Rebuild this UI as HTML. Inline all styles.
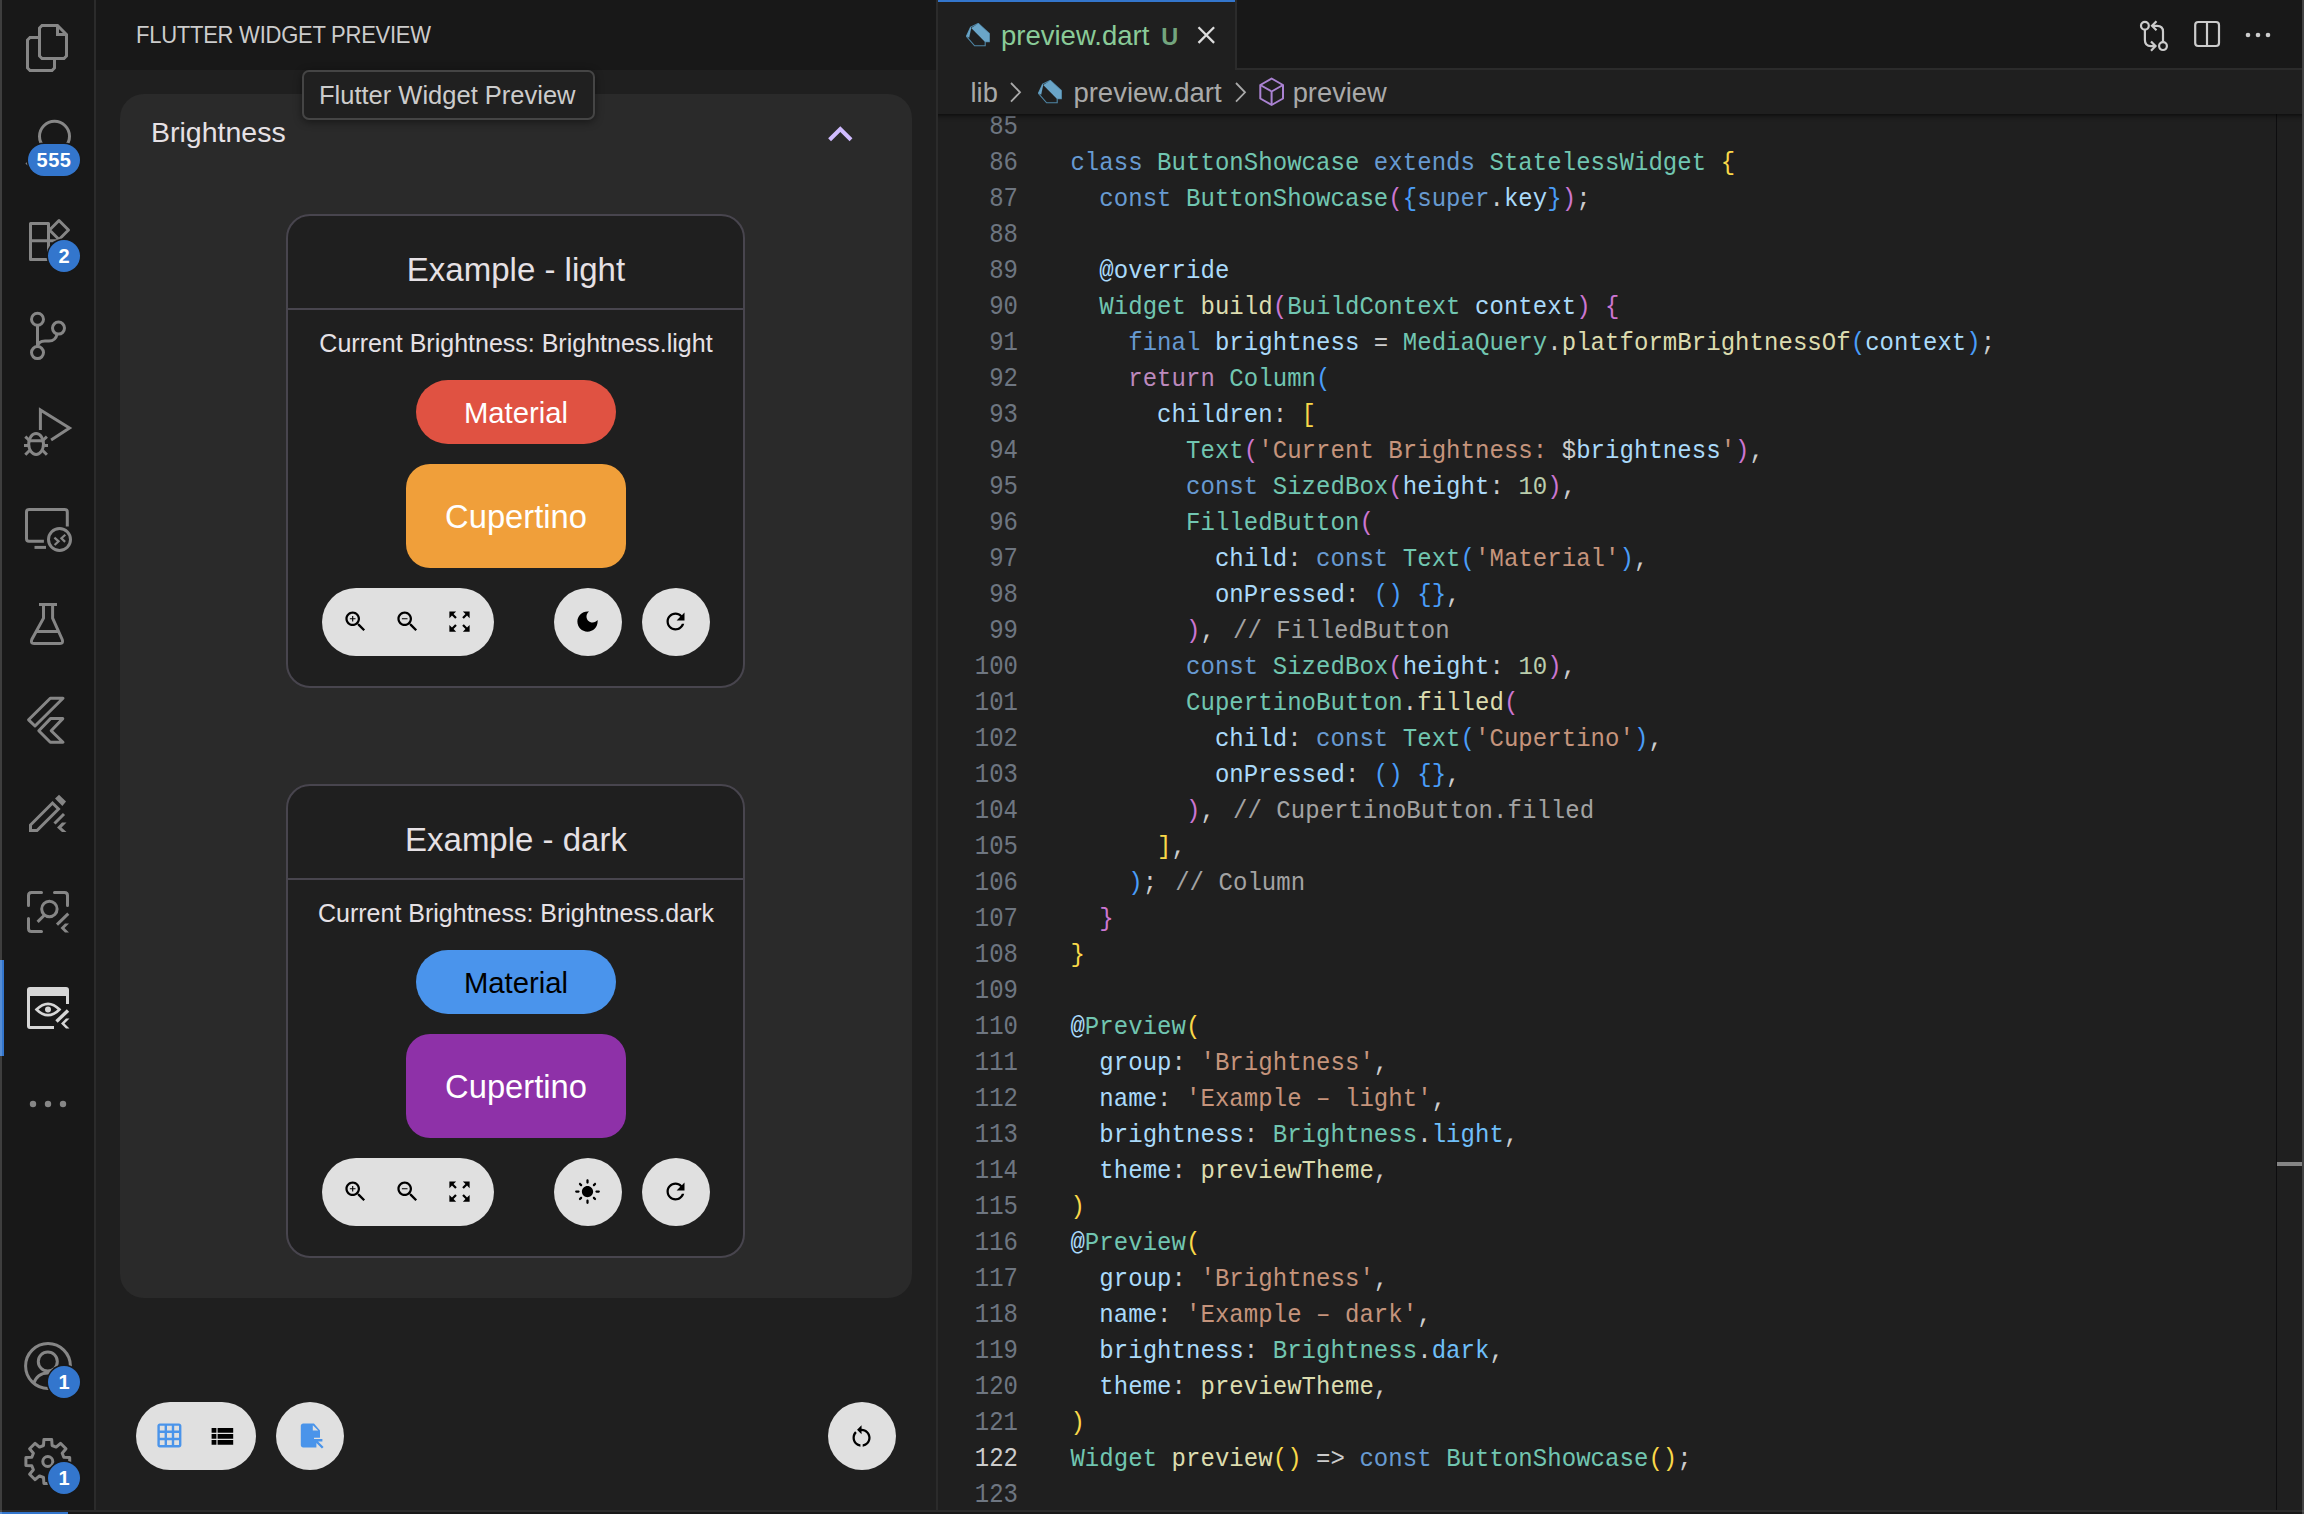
<!DOCTYPE html>
<html><head><meta charset="utf-8"><title>Flutter Widget Preview</title>
<style>
html,body{margin:0;padding:0;}
body{width:2304px;height:1514px;overflow:hidden;position:relative;background:#181818;font-family:"Liberation Sans",sans-serif;}
div,span,svg{box-sizing:border-box;}
.abs{position:absolute;}
.t1{position:absolute;line-height:1;white-space:pre;}
/* activity bar */
#act{position:absolute;left:0;top:0;width:96px;height:1510px;background:#181818;border-right:2px solid #2b2b2b;}
#act svg{position:absolute;left:0;top:0;}
.badge{position:absolute;height:32px;border-radius:16px;background:#3376cd;color:#fff;font:bold 20px/32px "Liberation Sans",sans-serif;text-align:center;}
#actind{position:absolute;left:0;top:960px;width:4px;height:96px;background:#3376cd;z-index:4;}
/* sidebar */
#side{position:absolute;left:96px;top:0;width:842px;height:1510px;background:#1f1f1f;border-right:2px solid #2b2b2b;}
#sidehead{position:absolute;left:0;top:0;width:840px;height:70px;background:#181818;}
#panel{position:absolute;left:24px;top:94px;width:792px;height:1204px;background:#2a2a2a;border-radius:24px;}
.card{position:absolute;left:190.4px;width:459px;height:474px;border:2px solid #48454e;border-radius:24px;background:#1f1f1f;}
.card .div{position:absolute;left:0;top:92px;width:455px;height:2px;background:#48454e;}
.pill{position:absolute;background:#e0e0e0;border-radius:34px;height:68px;}
.circ{position:absolute;background:#e0e0e0;border-radius:50%;width:68px;height:68px;}
#tooltip{position:absolute;left:206px;top:70px;width:293px;height:50px;background:#202020;border:2px solid #454545;border-radius:7px;box-shadow:0 2px 8px rgba(0,0,0,0.45);}
/* editor */
#editor{position:absolute;left:938px;top:0;width:1364px;height:1510px;background:#1f1f1f;overflow:hidden;}
#tabbar{position:absolute;left:0;top:0;width:1364px;height:70px;background:#181818;}
#tabbarborder{position:absolute;left:297px;top:68px;width:1067px;height:2px;background:#2b2b2b;}
#tab{position:absolute;left:0;top:0;width:299px;height:70px;background:#1f1f1f;border-right:2px solid #2b2b2b;}
#tabtop{position:absolute;left:0;top:0;width:297px;height:2px;background:#3376cd;}
#crumbs{position:absolute;left:0;top:70px;width:1364px;height:44px;background:#1f1f1f;z-index:3;}
#code{position:absolute;left:0;top:0;width:1338px;height:1510px;}
.ln{position:absolute;left:0;width:80px;text-align:right;font:24px/36px "Liberation Mono",monospace;color:#6e7681;white-space:pre;transform:scaleY(1.12);transform-origin:0 24.24px;}
.ln.act{color:#cccccc;}
.cl{position:absolute;left:132.4px;font:24px/36px "Liberation Mono",monospace;letter-spacing:0.047px;color:#cccccc;white-space:pre;transform:scaleY(1.1);transform-origin:0 24.24px;}
#scrollshadow{position:absolute;left:0;top:114px;width:1364px;height:8px;box-shadow:#000 0 6px 6px -6px inset;z-index:2;}
#ruler{position:absolute;left:1338px;top:114px;width:1px;height:1396px;background:#0d0d0f;}
#rulermark{position:absolute;left:1339px;top:1162px;width:25px;height:4px;background:#858585;}
#winl{position:absolute;left:0;top:0;width:2px;height:1514px;background:rgba(255,255,255,0.17);z-index:5;}
#winr{position:absolute;left:2302px;top:0;width:2px;height:1514px;background:rgba(255,255,255,0.19);z-index:5;}
#status{position:absolute;left:0;top:1510px;width:2304px;height:4px;background:#181818;border-top:2px solid #2b2b2b;}
#remote{position:absolute;left:0;top:0;width:68px;height:2px;background:#3376cd;}

</style></head>
<body>
<div id="act">
<svg width="96" height="1510" viewBox="0 0 96 1510" fill="none" stroke="#868686" stroke-width="3">
 <!-- files -->
 <path d="M42,25.5 H57.5 L66.5,34.5 V56 L64,58.5 H42 L39.5,56 V28 Z"/>
 <path d="M57.5,25.5 V34.5 H66.5"/>
 <path d="M39.5,37.5 H30 L27.5,40 V68 L30,70.5 H52 L54.5,68 V58.5"/>
 <!-- search -->
 <circle cx="54.5" cy="136.3" r="15"/>
 <path d="M43.5,147.5 L26.5,164.5"/>
 <!-- extensions -->
 <path d="M30.5,223.5 H48.5 V259.5 H30.5 Z M30.5,240.8 H66.5 V259.5 H48.5" stroke-linejoin="round"/>
 <path d="M59,220.5 L68.5,230 L59,239.5 L49.5,230 Z" stroke-linejoin="round"/>
 <!-- source control -->
 <circle cx="37.5" cy="319.2" r="6"/>
 <circle cx="58.5" cy="328.1" r="6"/>
 <circle cx="37.5" cy="352.6" r="6"/>
 <path d="M37.5,325.2 V346.6"/>
 <path d="M57.2,334 C56,339 53,341 49,341 H45 C41,341 38,343 37.5,346.6"/>
 <!-- run & debug -->
 <path d="M40.4,430 V410 L69.5,428.1 L51.1,440" stroke-linejoin="miter"/>
 <ellipse cx="36.1" cy="444" rx="7.4" ry="10.4"/>
 <path d="M28.7,440.8 H43.5 M24,445.6 H28 M44.2,445.6 H48 M25.3,436.6 L30,441 M46.9,436.6 L42.2,441 M25.3,454.7 L30,450 M46.9,454.7 L42.2,450"/>
 <!-- remote explorer -->
 <path d="M43.9,541.2 H29 Q26.5,541.2 26.5,538.7 V512 Q26.5,509.5 29,509.5 H64.8 Q67.3,509.5 67.3,512 V526.4"/>
 <path d="M34.5,547.4 H46"/>
 <circle cx="59.5" cy="539.5" r="11"/>
 <path d="M54.4,537.6 L58.6,541.3 L54.6,545 M65.3,534.7 L61.4,538.2 L65.1,541.9" stroke-width="2.2"/>
 <!-- testing -->
 <path d="M39,604.5 H57"/>
 <path d="M43.5,606 V618.2 L31.8,639.5 Q30.3,643.4 34,643.4 H60 Q63.7,643.4 62.2,639.5 L52.6,618.2 V606"/>
 <path d="M37,631.5 H59"/>
 <!-- flutter -->
 <path d="M50.3,698.3 H63 L35,726 L28.6,719.8 Z" stroke-linejoin="round"/>
 <path d="M50.5,718.6 H62.8 L51.2,730.8 L63,742.3 H50.3 L38.8,730.8 Z" stroke-linejoin="round"/>
 <!-- pencil -->
 <path d="M30.5,825 L52.5,803 L58.5,809 L37,830.5 H30.5 Z"/>
 <path d="M55,798.6 L59,794.8 L66,801.5 L62.4,806 Z" fill="#868686" stroke="none"/>
 <path d="M54.5,823.5 L64,814" stroke-width="3"/>
 <path d="M57,827.5 L62,822.5 H66.5 L61.5,827.5 L66.5,832 H62 Z" fill="#868686" stroke="none"/>
 <!-- search scan -->
 <path d="M28.5,905.5 V895.5 Q28.5,892.5 31.5,892.5 H41.5 M54.5,892.5 H64.5 Q67.5,892.5 67.5,895.5 V905.5 M28.5,918.5 V928.5 Q28.5,931.5 31.5,931.5 H41.5" stroke-linecap="round"/>
 <circle cx="49.4" cy="909" r="7.7"/>
 <path d="M44.3,915.2 L37.6,921.9"/>
 <path d="M57,924.6 L68.3,913.6"/>
 <path d="M60.5,928 L65,923.5 H69 L64.5,928 L69,932.5 H65 Z" fill="#868686" stroke="none"/>
 <!-- preview (active) -->
 <path d="M27,990 Q27,987 30,987 H66 Q69,987 69,990 V1004 H66 V996 H30 V1026 H54 V1029 H30 Q27,1029 27,1026 Z" fill="#d7d7d7" stroke="none"/>
 <path d="M36.5,1009.5 Q48,998 59.5,1009.5 Q48,1021 36.5,1009.5 Z" stroke="#d7d7d7" stroke-width="2.6"/>
 <circle cx="48" cy="1009.5" r="3" fill="#d7d7d7" stroke="none"/>
 <path d="M56.5,1021.5 L68,1010.5" stroke="#d7d7d7" stroke-width="3.4"/>
 <path d="M61,1023.5 L66,1018.5 H69.5 L64.5,1023.5 L69.5,1028.5 H66 Z" fill="#d7d7d7" stroke="none"/>
 <!-- more -->
 <circle cx="33" cy="1104" r="3.2" fill="#868686" stroke="none"/>
 <circle cx="48" cy="1104" r="3.2" fill="#868686" stroke="none"/>
 <circle cx="63" cy="1104" r="3.2" fill="#868686" stroke="none"/>
 <!-- accounts -->
 <circle cx="48" cy="1366" r="22.4"/>
 <circle cx="47.8" cy="1361.5" r="9.5"/>
 <path d="M33.5,1384 Q37,1373 48,1373 Q59,1373 62.5,1384"/>
 <!-- settings -->
 <path d="M43.9,1439.6 L51.7,1439.6 L52.1,1445.5 L56.1,1447.1 L60.5,1443.3 L66.0,1448.8 L62.2,1453.2 L63.8,1457.2 L69.7,1457.6 L69.7,1465.4 L63.8,1465.8 L62.2,1469.8 L66.0,1474.2 L60.5,1479.7 L56.1,1475.9 L52.1,1477.5 L51.7,1483.4 L43.9,1483.4 L43.5,1477.5 L39.5,1475.9 L35.1,1479.7 L29.6,1474.2 L33.4,1469.8 L31.8,1465.8 L25.9,1465.4 L25.9,1457.6 L31.8,1457.2 L33.4,1453.2 L29.6,1448.8 L35.1,1443.3 L39.5,1447.1 L43.5,1445.5 Z" stroke-linejoin="round"/>
 <circle cx="47.8" cy="1461.5" r="5"/>
</svg>
<div class="badge" style="left:28px;top:144px;width:52px;box-shadow:0 0 0 1.5px #181818;letter-spacing:0.5px">555</div>
<div class="badge" style="left:48px;top:240px;width:32px;box-shadow:0 0 0 1.5px #181818">2</div>
<div class="badge" style="left:48px;top:1366px;width:32px;box-shadow:0 0 0 1.5px #181818">1</div>
<div class="badge" style="left:48px;top:1462px;width:32px;box-shadow:0 0 0 1.5px #181818">1</div>
<div id="actind"></div>
</div>

<div id="side">
 <div id="sidehead"><div class="t1" style="left:40px;top:24.5px;font-size:22px;letter-spacing:-0.25px;color:#cccccc;transform:scaleY(1.08);transform-origin:0 18.7px">FLUTTER WIDGET PREVIEW</div></div>
 <div id="panel">
  <div class="t1" style="left:31px;top:23.8px;font-size:28.5px;color:#e6e1e5">Brightness</div>
  <svg class="abs" style="left:695.65px;top:15.6px" width="48.6" height="48.6" viewBox="0 0 24 24"><path d="M12 8l-6 6 1.41 1.41L12 10.83l4.59 4.58L18 14z" fill="#d0bcff"/></svg>
 </div>
 <!-- card 1 -->
 <div class="card" style="top:214px">
  <div class="t1" style="left:0;width:455.2px;text-align:center;top:36.6px;font-size:33px;color:#e6e1e5">Example - light</div>
  <div class="div"></div>
  <div class="t1" style="left:0;width:455.2px;text-align:center;top:114.6px;font-size:25px;color:#e6e1e5">Current Brightness: Brightness.light</div>
  <div class="abs" style="left:127.6px;top:164px;width:200px;height:64px;border-radius:32px;background:#e05242"></div>
  <div class="t1" style="left:0;width:455.2px;text-align:center;top:181.5px;font-size:29.3px;color:#ffffff">Material</div>
  <div class="abs" style="left:117.6px;top:248px;width:220px;height:104px;border-radius:24px;background:#f09f3a"></div>
  <div class="t1" style="left:0;width:455.2px;text-align:center;top:284.5px;font-size:32.7px;color:#ffffff">Cupertino</div>
  <div class="pill" style="left:33.6px;top:372px;width:172px"></div>
  <div class="circ" style="left:265.6px;top:372px"></div>
  <div class="circ" style="left:353.6px;top:372px"></div>
  <svg class="abs" style="left:53.8px;top:392.2px" width="27" height="27" viewBox="0 0 24 24"><path d="M15.5 14h-.79l-.28-.27C15.41 12.59 16 11.11 16 9.5 16 5.91 13.09 3 9.5 3S3 5.91 3 9.5 5.91 16 9.5 16c1.61 0 3.090-.59 4.23-1.57l.27.28v.79l5 4.99L20.49 19l-4.99-5zm-6 0C7.01 14 5 11.99 5 9.5S7.01 5 9.5 5 14 7.01 14 9.5 11.99 14 9.5 14zm2.5-4h-2v2H9v-2H7V9h2V7h1v2h2v1z" fill="#000"/></svg><svg class="abs" style="left:105.9px;top:392.2px" width="27" height="27" viewBox="0 0 24 24"><path d="M15.5 14h-.79l-.28-.27C15.41 12.59 16 11.11 16 9.5 16 5.910 13.09 3 9.5 3S3 5.91 3 9.5 5.91 16 9.5 16c1.61 0 3.09-.59 4.23-1.57l.27.28v.79l5 4.99L20.49 19l-4.99-5zm-6 0C7.01 14 5 11.99 5 9.5S7.01 5 9.5 5 14 7.01 14 9.5 11.99 14 9.5 14zM7 9h5v1H7z" fill="#000"/></svg><svg class="abs" style="left:158.0px;top:392.2px" width="27" height="27" viewBox="0 0 24 24"><path d="M15 3l2.3 2.3-2.89 2.87 1.42 1.42L18.7 6.7 21 9V3h-6zM3 9l2.3-2.3 2.87 2.89 1.42-1.42L6.7 5.3 9 3H3v6zm6 12l-2.3-2.3 2.89-2.87-1.42-1.42L5.3 17.3 3 15v6h6zm12-6l-2.3 2.3-2.87-2.890-1.42 1.42 2.89 2.87L15 21h6v-6z" fill="#000"/></svg><svg class="abs" style="left:286.1px;top:392.2px" width="27" height="27" viewBox="0 0 24 24"><path d="M12 3c-4.97 0-9 4.03-9 9s4.03 9 9 9 9-4.03 9-9c0-.46-.04-.92-.1-1.36-.98 1.37-2.58 2.26-4.4 2.26-2.98 0-5.4-2.42-5.4-5.4 0-1.81.89-3.42 2.26-4.4-.44-.06-.9-.1-1.36-.1z" fill="#000"/></svg><svg class="abs" style="left:374.0px;top:392.4px" width="27" height="27" viewBox="0 0 24 24"><path d="M17.65 6.35C16.2 4.9 14.21 4 12 4c-4.42 0-7.99 3.58-7.99 8s3.57 8 7.99 8c3.73 0 6.84-2.55 7.73-6h-2.08c-.82 2.33-3.04 4-5.65 4-3.31 0-6-2.69-6-6s2.69-6 6-6c1.66 0 3.14.69 4.22 1.78L13 11h7V4l-2.35 2.35z" fill="#000"/></svg>
 </div>
 <!-- card 2 -->
 <div class="card" style="top:784px">
  <div class="t1" style="left:0;width:455.2px;text-align:center;top:36.6px;font-size:33px;color:#e6e1e5">Example - dark</div>
  <div class="div"></div>
  <div class="t1" style="left:0;width:455.2px;text-align:center;top:114.6px;font-size:25px;color:#e6e1e5">Current Brightness: Brightness.dark</div>
  <div class="abs" style="left:127.6px;top:164px;width:200px;height:64px;border-radius:32px;background:#4a94ec"></div>
  <div class="t1" style="left:0;width:455.2px;text-align:center;top:181.5px;font-size:29.3px;color:#000000">Material</div>
  <div class="abs" style="left:117.6px;top:248px;width:220px;height:104px;border-radius:24px;background:#8e31a8"></div>
  <div class="t1" style="left:0;width:455.2px;text-align:center;top:284.5px;font-size:32.7px;color:#ffffff">Cupertino</div>
  <div class="pill" style="left:33.6px;top:372px;width:172px"></div>
  <div class="circ" style="left:265.6px;top:372px"></div>
  <div class="circ" style="left:353.6px;top:372px"></div>
  <svg class="abs" style="left:53.8px;top:392.2px" width="27" height="27" viewBox="0 0 24 24"><path d="M15.5 14h-.79l-.28-.27C15.41 12.59 16 11.11 16 9.5 16 5.91 13.09 3 9.5 3S3 5.91 3 9.5 5.91 16 9.5 16c1.61 0 3.090-.59 4.23-1.57l.27.28v.79l5 4.99L20.49 19l-4.99-5zm-6 0C7.01 14 5 11.99 5 9.5S7.01 5 9.5 5 14 7.01 14 9.5 11.99 14 9.5 14zm2.5-4h-2v2H9v-2H7V9h2V7h1v2h2v1z" fill="#000"/></svg><svg class="abs" style="left:105.9px;top:392.2px" width="27" height="27" viewBox="0 0 24 24"><path d="M15.5 14h-.79l-.28-.27C15.41 12.59 16 11.11 16 9.5 16 5.910 13.09 3 9.5 3S3 5.91 3 9.5 5.91 16 9.5 16c1.61 0 3.09-.59 4.23-1.57l.27.28v.79l5 4.99L20.49 19l-4.99-5zm-6 0C7.01 14 5 11.99 5 9.5S7.01 5 9.5 5 14 7.01 14 9.5 11.99 14 9.5 14zM7 9h5v1H7z" fill="#000"/></svg><svg class="abs" style="left:158.0px;top:392.2px" width="27" height="27" viewBox="0 0 24 24"><path d="M15 3l2.3 2.3-2.89 2.87 1.42 1.42L18.7 6.7 21 9V3h-6zM3 9l2.3-2.3 2.87 2.89 1.42-1.42L6.7 5.3 9 3H3v6zm6 12l-2.3-2.3 2.89-2.87-1.42-1.42L5.3 17.3 3 15v6h6zm12-6l-2.3 2.3-2.87-2.890-1.42 1.42 2.89 2.87L15 21h6v-6z" fill="#000"/></svg><svg class="abs" style="left:286.1px;top:392.2px" width="27" height="27" viewBox="0 0 24 24"><path d="M12 7c-2.76 0-5 2.24-5 5s2.24 5 5 5 5-2.24 5-5-2.24-5-5-5zM2 13h2c.55 0 1-.45 1-1s-.45-1-1-1H2c-.55 0-1 .45-1 1s.45 1 1 1zm18 0h2c.55 0 1-.45 1-1s-.45-1-1-1h-2c-.55 0-1 .45-1 1s.45 1 1 1zM11 2v2c0 .55.45 1 1 1s1-.45 1-1V2c0-.55-.45-1-1-1s-1 .45-1 1zm0 18v2c0 .55.45 1 1 1s1-.45 1-1v-2c0-.55-.45-1-1-1s-1 .45-1 1zM5.99 4.58c-.39-.39-1.03-.39-1.41 0-.39.39-.39 1.03 0 1.41l1.06 1.06c.39.39 1.03.39 1.41 0s.39-1.03 0-1.41L5.99 4.58zm12.37 12.37c-.39-.39-1.03-.39-1.41 0-.39.39-.39 1.03 0 1.41l1.06 1.06c.39.39 1.03.39 1.41 0 .39-.39.39-1.03 0-1.41l-1.06-1.06zm1.06-10.96c.39-.39.39-1.03 0-1.41-.39-.39-1.03-.39-1.41 0l-1.06 1.06c-.39.39-.39 1.03 0 1.41s1.03.39 1.41 0l1.06-1.06zM7.05 18.36c.39-.39.39-1.03 0-1.41-.39-.39-1.03-.39-1.41 0l-1.06 1.06c-.39.39-.39 1.03 0 1.41s1.03.39 1.41 0l1.06-1.06z" fill="#000"/></svg><svg class="abs" style="left:374.0px;top:392.4px" width="27" height="27" viewBox="0 0 24 24"><path d="M17.65 6.35C16.2 4.9 14.21 4 12 4c-4.42 0-7.99 3.58-7.99 8s3.57 8 7.99 8c3.73 0 6.84-2.55 7.73-6h-2.08c-.82 2.33-3.04 4-5.65 4-3.31 0-6-2.69-6-6s2.69-6 6-6c1.66 0 3.14.69 4.22 1.78L13 11h7V4l-2.35 2.35z" fill="#000"/></svg>
 </div>
 <!-- bottom toolbar -->
 <div class="pill" style="left:40px;top:1402px;width:120px"></div>
 <div class="circ" style="left:180px;top:1402px"></div>
 <div class="circ" style="left:732px;top:1402px"></div>
 <svg class="abs" style="left:59.45px;top:1421.45px" width="28.8" height="28.8" viewBox="0 0 24 24"><path d="M20 2H4c-1.1 0-2 .9-2 2v16c0 1.1.9 2 2 2h16c1.1 0 2-.9 2-2V4c0-1.1-.9-2-2-2zM8 20H4v-4h4v4zm0-6H4v-4h4v4zm0-6H4V4h4v4zm6 12h-4v-4h4v4zm0-6h-4v-4h4v4zm0-6h-4V4h4v4zm6 12h-4v-4h4v4zm0-6h-4v-4h4v4zm0-6h-4V4h4v4z" fill="#4a94ea"/></svg><svg class="abs" style="left:111.6px;top:1421.6px" width="28.8" height="28.8" viewBox="0 0 24 24"><path d="M3 14h4v-4H3v4zm0 5h4v-4H3v4zM3 9h4V5H3v4zm5 5h13v-4H8v4zm0 5h13v-4H8v4zM8 5v4h13V5H8z" fill="#000"/></svg><svg class="abs" style="left:199.65px;top:1421px" width="28.8" height="28.8" viewBox="0 0 24 24"><path d="M15 2H6c-1.1 0-2 .89-2 2v16c0 1.1.89 2 1.99 2H15v-8h5V8l-5-6zm-1 8V3.5L18.5 8H14zm3 8.41L21.59 23 23 21.59 18.41 17H22v-2h-7v7h2v-3.59z" fill="#4a94ea"/></svg><svg class="abs" style="left:752.4px;top:1422.6px" width="27.1" height="27.1" viewBox="0 0 24 24"><path d="M12 5V2L8 6l4 4V7c3.31 0 6 2.69 6 6 0 2.970-2.17 5.43-5 5.91v2.02c3.95-.49 7-3.85 7-7.93 0-4.42-3.58-8-8-8zm-6 8c0-1.65.67-3.15 1.76-4.24L6.34 7.34C4.9 8.79 4 10.79 4 13c0 4.08 3.05 7.44 7 7.930v-2.02c-2.83-.48-5-2.94-5-5.91z" fill="#000"/></svg>
 <!-- tooltip -->
 <div id="tooltip"><div class="t1" style="left:15px;top:10.5px;font-size:25.5px;color:#cccccc">Flutter Widget Preview</div></div>
</div>

<div id="editor">
<div id="tabbar">
 <div id="tabbarborder"></div>
 <div id="tab">
  <div id="tabtop"></div>
  <svg class="abs" style="left:27.7px;top:22.9px" width="24" height="24" viewBox="0 0 24 24"><path d="M12.3,0.4 L23.3,10.4 V18.7 H19.2 V22.8 H8.6 L0.4,13.3 L4.6,4.1 Z" fill="none" stroke="#4f86a6" stroke-width="1.1"/><path d="M5.2,4.9 L12.3,0.4 L23.3,10.4 V18.7 H18.8 Z" fill="#6aa5c8"/><path d="M0.4,13.3 L4.6,4.1 L5.2,4.9 L3.2,14.8 Z" fill="#6aa5c8"/></svg>
  <div class="t1" style="left:63px;top:21.7px;font-size:27.5px;color:#8acb98">preview.dart</div>
  <div class="t1" style="left:223.2px;top:25.5px;font-size:23.5px;font-weight:bold;color:#73a57e">U</div>
  <svg class="abs" style="left:0;top:0" width="298" height="70"><path d="M260.5,27.3 L276.1,42.9 M276.1,27.3 L260.5,42.9" stroke="#dddddd" stroke-width="2.3" fill="none"/></svg>
 </div>
 <svg class="abs" style="left:1190px;top:0" width="174" height="70" fill="none" stroke="#cccccc" stroke-width="2.2">
  <circle cx="16.9" cy="25.8" r="3.9"/>
  <circle cx="35" cy="46.1" r="3.9"/>
  <path d="M16.9,29.7 V40 Q16.9,46.1 23,46.1 H27.5"/>
  <path d="M23,41.5 L27.5,46.1 L23,50.7"/>
  <path d="M35,42.2 V31.5 Q35,25.8 29,25.8 H24"/>
  <path d="M28.5,21.3 L24,25.8 L28.5,30.3"/>
  <rect x="67.2" y="22" width="23.8" height="24" rx="3"/>
  <path d="M79,22 V46"/>
  <circle cx="120" cy="35" r="2.3" fill="#cccccc" stroke="none"/>
  <circle cx="130" cy="35" r="2.3" fill="#cccccc" stroke="none"/>
  <circle cx="140" cy="35" r="2.3" fill="#cccccc" stroke="none"/>
 </svg>
</div>
<div id="crumbs">
 <div class="t1" style="left:32.5px;top:8.9px;font-size:27.3px;color:#a9a9a9">lib</div>
 <svg class="abs" style="left:0;top:0" width="400" height="44" fill="none" stroke="#a9a9a9" stroke-width="1.8">
  <path d="M73,13 L82,22.3 L73,31.6"/>
  <path d="M298,13 L307,22.3 L298,31.6"/>
  <g stroke="#aa82d2" stroke-width="2" stroke-linejoin="round">
   <path d="M333.6,8.5 L345,15 V28.5 L333.6,35 L322.3,28.5 V15 Z"/>
   <path d="M322.3,15 L333.6,21.5 L345,15 M333.6,21.5 V35"/>
  </g>
 </svg>
 <svg class="abs" style="left:99.9px;top:9.9px" width="24" height="24" viewBox="0 0 24 24"><path d="M12.3,0.4 L23.3,10.4 V18.7 H19.2 V22.8 H8.6 L0.4,13.3 L4.6,4.1 Z" fill="none" stroke="#4f86a6" stroke-width="1.1"/><path d="M5.2,4.9 L12.3,0.4 L23.3,10.4 V18.7 H18.8 Z" fill="#6aa5c8"/><path d="M0.4,13.3 L4.6,4.1 L5.2,4.9 L3.2,14.8 Z" fill="#6aa5c8"/></svg>
 <div class="t1" style="left:135.4px;top:8.9px;font-size:27.5px;color:#a9a9a9">preview.dart</div>
 <div class="t1" style="left:354.7px;top:8.9px;font-size:27.3px;color:#a9a9a9">preview</div>
</div>

<div id="code">
<div class="ln" style="top:110px">85</div>
<div class="ln" style="top:146px">86</div>
<div class="cl" style="top:146px"><span style="color:#679ad1">class</span> <span style="color:#71c6b1">ButtonShowcase</span> <span style="color:#679ad1">extends</span> <span style="color:#71c6b1">StatelessWidget</span> <span style="color:#f9d849">{</span></div>
<div class="ln" style="top:182px">87</div>
<div class="cl" style="top:182px">  <span style="color:#679ad1">const</span> <span style="color:#71c6b1">ButtonShowcase</span><span style="color:#cc76d1">(</span><span style="color:#4a9df8">{</span><span style="color:#679ad1">super</span><span style="color:#cccccc">.</span><span style="color:#aadafa">key</span><span style="color:#4a9df8">}</span><span style="color:#cc76d1">)</span><span style="color:#cccccc">;</span></div>
<div class="ln" style="top:218px">88</div>
<div class="ln" style="top:254px">89</div>
<div class="cl" style="top:254px">  <span style="color:#aadafa">@override</span></div>
<div class="ln" style="top:290px">90</div>
<div class="cl" style="top:290px">  <span style="color:#71c6b1">Widget</span> <span style="color:#dcdcaf">build</span><span style="color:#cc76d1">(</span><span style="color:#71c6b1">BuildContext</span> <span style="color:#aadafa">context</span><span style="color:#cc76d1">)</span> <span style="color:#cc76d1">{</span></div>
<div class="ln" style="top:326px">91</div>
<div class="cl" style="top:326px">    <span style="color:#679ad1">final</span> <span style="color:#aadafa">brightness</span><span style="color:#cccccc"> = </span><span style="color:#71c6b1">MediaQuery</span><span style="color:#cccccc">.</span><span style="color:#dcdcaf">platformBrightnessOf</span><span style="color:#4a9df8">(</span><span style="color:#aadafa">context</span><span style="color:#4a9df8">)</span><span style="color:#cccccc">;</span></div>
<div class="ln" style="top:362px">92</div>
<div class="cl" style="top:362px">    <span style="color:#bc89bd">return</span> <span style="color:#71c6b1">Column</span><span style="color:#4a9df8">(</span></div>
<div class="ln" style="top:398px">93</div>
<div class="cl" style="top:398px">      <span style="color:#aadafa">children</span><span style="color:#cccccc">: </span><span style="color:#f9d849">[</span></div>
<div class="ln" style="top:434px">94</div>
<div class="cl" style="top:434px">        <span style="color:#71c6b1">Text</span><span style="color:#cc76d1">(</span><span style="color:#c5947c">&#x27;Current Brightness: </span><span style="color:#cccccc">$</span><span style="color:#aadafa">brightness</span><span style="color:#c5947c">&#x27;</span><span style="color:#cc76d1">)</span><span style="color:#cccccc">,</span></div>
<div class="ln" style="top:470px">95</div>
<div class="cl" style="top:470px">        <span style="color:#679ad1">const</span> <span style="color:#71c6b1">SizedBox</span><span style="color:#cc76d1">(</span><span style="color:#aadafa">height</span><span style="color:#cccccc">: </span><span style="color:#bacdab">10</span><span style="color:#cc76d1">)</span><span style="color:#cccccc">,</span></div>
<div class="ln" style="top:506px">96</div>
<div class="cl" style="top:506px">        <span style="color:#71c6b1">FilledButton</span><span style="color:#cc76d1">(</span></div>
<div class="ln" style="top:542px">97</div>
<div class="cl" style="top:542px">          <span style="color:#aadafa">child</span><span style="color:#cccccc">: </span><span style="color:#679ad1">const</span> <span style="color:#71c6b1">Text</span><span style="color:#4a9df8">(</span><span style="color:#c5947c">&#x27;Material&#x27;</span><span style="color:#4a9df8">)</span><span style="color:#cccccc">,</span></div>
<div class="ln" style="top:578px">98</div>
<div class="cl" style="top:578px">          <span style="color:#aadafa">onPressed</span><span style="color:#cccccc">: </span><span style="color:#4a9df8">()</span> <span style="color:#4a9df8">{}</span><span style="color:#cccccc">,</span></div>
<div class="ln" style="top:614px">99</div>
<div class="cl" style="top:614px">        <span style="color:#cc76d1">)</span><span style="color:#cccccc">,</span> <span style="color:#a3a3a3;margin-left:3.6px">// FilledButton</span></div>
<div class="ln" style="top:650px">100</div>
<div class="cl" style="top:650px">        <span style="color:#679ad1">const</span> <span style="color:#71c6b1">SizedBox</span><span style="color:#cc76d1">(</span><span style="color:#aadafa">height</span><span style="color:#cccccc">: </span><span style="color:#bacdab">10</span><span style="color:#cc76d1">)</span><span style="color:#cccccc">,</span></div>
<div class="ln" style="top:686px">101</div>
<div class="cl" style="top:686px">        <span style="color:#71c6b1">CupertinoButton</span><span style="color:#cccccc">.</span><span style="color:#dcdcaf">filled</span><span style="color:#cc76d1">(</span></div>
<div class="ln" style="top:722px">102</div>
<div class="cl" style="top:722px">          <span style="color:#aadafa">child</span><span style="color:#cccccc">: </span><span style="color:#679ad1">const</span> <span style="color:#71c6b1">Text</span><span style="color:#4a9df8">(</span><span style="color:#c5947c">&#x27;Cupertino&#x27;</span><span style="color:#4a9df8">)</span><span style="color:#cccccc">,</span></div>
<div class="ln" style="top:758px">103</div>
<div class="cl" style="top:758px">          <span style="color:#aadafa">onPressed</span><span style="color:#cccccc">: </span><span style="color:#4a9df8">()</span> <span style="color:#4a9df8">{}</span><span style="color:#cccccc">,</span></div>
<div class="ln" style="top:794px">104</div>
<div class="cl" style="top:794px">        <span style="color:#cc76d1">)</span><span style="color:#cccccc">,</span> <span style="color:#a3a3a3;margin-left:3.6px">// CupertinoButton.filled</span></div>
<div class="ln" style="top:830px">105</div>
<div class="cl" style="top:830px">      <span style="color:#f9d849">]</span><span style="color:#cccccc">,</span></div>
<div class="ln" style="top:866px">106</div>
<div class="cl" style="top:866px">    <span style="color:#4a9df8">)</span><span style="color:#cccccc">;</span> <span style="color:#a3a3a3;margin-left:3.6px">// Column</span></div>
<div class="ln" style="top:902px">107</div>
<div class="cl" style="top:902px">  <span style="color:#cc76d1">}</span></div>
<div class="ln" style="top:938px">108</div>
<div class="cl" style="top:938px"><span style="color:#f9d849">}</span></div>
<div class="ln" style="top:974px">109</div>
<div class="ln" style="top:1010px">110</div>
<div class="cl" style="top:1010px"><span style="color:#aadafa">@</span><span style="color:#71c6b1">Preview</span><span style="color:#f9d849">(</span></div>
<div class="ln" style="top:1046px">111</div>
<div class="cl" style="top:1046px">  <span style="color:#aadafa">group</span><span style="color:#cccccc">: </span><span style="color:#c5947c">&#x27;Brightness&#x27;</span><span style="color:#cccccc">,</span></div>
<div class="ln" style="top:1082px">112</div>
<div class="cl" style="top:1082px">  <span style="color:#aadafa">name</span><span style="color:#cccccc">: </span><span style="color:#c5947c">&#x27;Example – light&#x27;</span><span style="color:#cccccc">,</span></div>
<div class="ln" style="top:1118px">113</div>
<div class="cl" style="top:1118px">  <span style="color:#aadafa">brightness</span><span style="color:#cccccc">: </span><span style="color:#71c6b1">Brightness</span><span style="color:#cccccc">.</span><span style="color:#6fbff9">light</span><span style="color:#cccccc">,</span></div>
<div class="ln" style="top:1154px">114</div>
<div class="cl" style="top:1154px">  <span style="color:#aadafa">theme</span><span style="color:#cccccc">: </span><span style="color:#dcdcaf">previewTheme</span><span style="color:#cccccc">,</span></div>
<div class="ln" style="top:1190px">115</div>
<div class="cl" style="top:1190px"><span style="color:#f9d849">)</span></div>
<div class="ln" style="top:1226px">116</div>
<div class="cl" style="top:1226px"><span style="color:#aadafa">@</span><span style="color:#71c6b1">Preview</span><span style="color:#f9d849">(</span></div>
<div class="ln" style="top:1262px">117</div>
<div class="cl" style="top:1262px">  <span style="color:#aadafa">group</span><span style="color:#cccccc">: </span><span style="color:#c5947c">&#x27;Brightness&#x27;</span><span style="color:#cccccc">,</span></div>
<div class="ln" style="top:1298px">118</div>
<div class="cl" style="top:1298px">  <span style="color:#aadafa">name</span><span style="color:#cccccc">: </span><span style="color:#c5947c">&#x27;Example – dark&#x27;</span><span style="color:#cccccc">,</span></div>
<div class="ln" style="top:1334px">119</div>
<div class="cl" style="top:1334px">  <span style="color:#aadafa">brightness</span><span style="color:#cccccc">: </span><span style="color:#71c6b1">Brightness</span><span style="color:#cccccc">.</span><span style="color:#6fbff9">dark</span><span style="color:#cccccc">,</span></div>
<div class="ln" style="top:1370px">120</div>
<div class="cl" style="top:1370px">  <span style="color:#aadafa">theme</span><span style="color:#cccccc">: </span><span style="color:#dcdcaf">previewTheme</span><span style="color:#cccccc">,</span></div>
<div class="ln" style="top:1406px">121</div>
<div class="cl" style="top:1406px"><span style="color:#f9d849">)</span></div>
<div class="ln act" style="top:1442px">122</div>
<div class="cl" style="top:1442px"><span style="color:#71c6b1">Widget</span> <span style="color:#dcdcaf">preview</span><span style="color:#f9d849">()</span><span style="color:#cccccc"> =&gt; </span><span style="color:#679ad1">const</span> <span style="color:#71c6b1">ButtonShowcase</span><span style="color:#f9d849">()</span><span style="color:#cccccc">;</span></div>
<div class="ln" style="top:1478px">123</div>
</div>
<div id="scrollshadow"></div>
<div id="ruler"></div>
<div id="rulermark"></div>
</div>
<div id="winl"></div><div id="winr"></div>
<div id="status"><div id="remote"></div></div>
</body></html>
